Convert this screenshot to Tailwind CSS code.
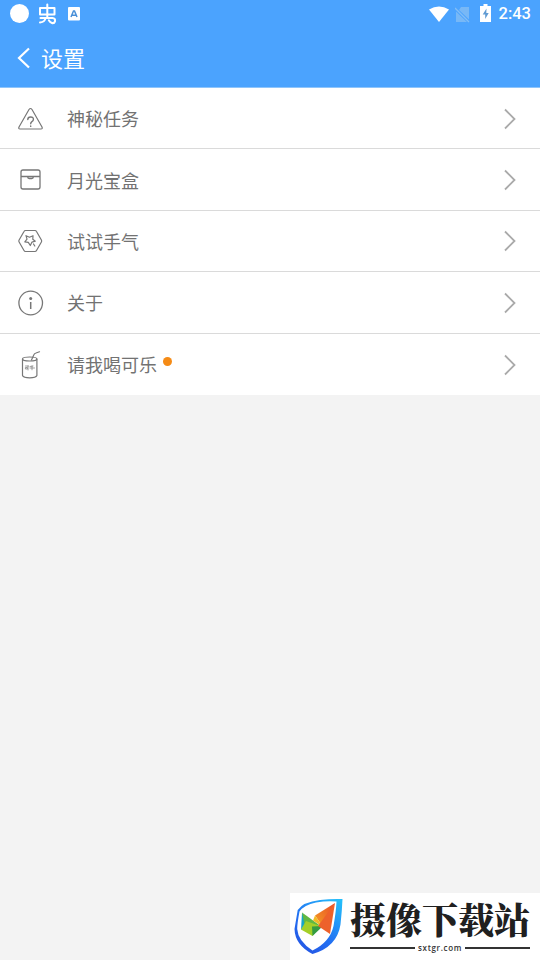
<!DOCTYPE html>
<html lang="zh-CN">
<head>
<meta charset="utf-8">
<title>设置</title>
<script src="https://cdn.jsdelivr.net/npm/@tailwindcss/browser@4"></script>
</head>
<body class="bg-[#f3f3f3] font-['Noto_Sans_CJK_SC',sans-serif]">
<div class="relative flex h-[960px] w-[540px] flex-col overflow-hidden">
  <header class="h-[88px] shrink-0 border-b border-[#8fc5fb] bg-[#4ba3fe] text-white">
    <div class="flex h-7 items-center justify-between pr-[9px] pl-[10px]">
      <div class="flex items-center">
        <span class="-mt-[2px] size-[19px] rounded-full bg-white"></span>
        <svg class="ml-[9px]" width="19" height="22" viewBox="0 0 19 22" fill="none" stroke="#fff" stroke-width="2" stroke-linecap="round" stroke-linejoin="round"><path d="M2 5h14.500v6.500H2zM9.300 1.500v13.500M2.500 15h12q3 .3 2.500 3.300-.8 2.300-3 1.700-2-.7-3.200-2.700M7.500 15q-.5 4-5.500 4.500"/></svg>
        <svg class="ml-[11px]" width="12" height="14" viewBox="0 0 12 14"><rect width="12" height="13.500" rx="1" fill="#fff"/><path d="M3 10 5.500 4h1L9 10M4 8.200h4" fill="none" stroke="#4b91d8" stroke-width="1.500"/></svg>
      </div>
      <div class="flex items-center">
        <svg class="-mt-px" width="20" height="16" viewBox="0 0 20 16"><path d="M0 3.500Q10-2.500 20 3.500L10 16Z" fill="#fff"/></svg>
        <svg class="ml-[6px]" width="15" height="17" viewBox="0 0 15 17"><path d="M6 1h8v12.500L4 4zM1 5.500l11 10.500H1z" fill="#78b8f6"/><path d="m0 2 14 14" stroke="#83bef6" stroke-width="1.300"/></svg>
        <svg class="-mt-[2px] ml-[10px]" width="11" height="18" viewBox="0 0 11 18"><path d="M3.500 0h4v2H11v16H0V2h3.500z" fill="#fff"/><path d="M6.500 4.500 2.700 10.500h2.500V15l3.500-6H6.300z" fill="#609bd3"/></svg>
        <span class="ml-[8px] font-[Roboto,sans-serif] text-[16.500px] leading-none font-medium">2:43</span>
      </div>
    </div>
    <div class="flex h-[59px] items-center pl-[17px]">
      <svg width="14" height="22" viewBox="0 0 14 22" fill="none" stroke="#fff" stroke-width="2.200"><path d="M12 1.500 2 11l10 9.500"/></svg>
      <h1 class="-mt-px ml-[10px] text-[22px] leading-none font-normal">设置</h1>
    </div>
  </header>
  <main class="h-[307px] shrink-0 divide-y divide-[#dadada] bg-white text-[18px] text-[#727272]">
    <a class="flex h-[61.400px] items-center pt-px pr-[23px] pl-[15px]">
      <svg width="32" height="32" viewBox="0 0 32 32" fill="none" stroke="#777" stroke-width="1.200" stroke-linejoin="round" stroke-linecap="round"><path d="M14 6.500q1.500-2 3 0l10 17.500q.8 2-1 2H5q-1.800 0-1-2z"/><path d="M12.800 16.500q0-2.500 2.800-2.500t2.800 2.300q0 1.500-1.500 2.300-1.200.7-1.200 2.200M15.700 23v.4" stroke-width="1.400"/></svg>
      <span class="ml-5 flex-1">神秘任务</span>
      <svg width="14" height="22" viewBox="0 0 14 22" fill="none" stroke="#aaa" stroke-width="1.800"><path d="M2 1.500 11.500 11 2 20.500"/></svg>
    </a>
    <a class="flex h-[61.400px] items-center pt-px pr-[23px] pl-[15px]">
      <svg width="32" height="32" viewBox="0 0 32 32" fill="none" stroke="#777" stroke-width="1.300"><rect x="6" y="6" width="19" height="19" rx="2"/><path d="M6 12.500h19M12.500 12.500q.2 2 1.700 2h2.600q1.500 0 1.700-2"/></svg>
      <span class="ml-5 flex-1">月光宝盒</span>
      <svg width="14" height="22" viewBox="0 0 14 22" fill="none" stroke="#aaa" stroke-width="1.800"><path d="M2 1.500 11.500 11 2 20.500"/></svg>
    </a>
    <a class="flex h-[61.400px] items-center pt-px pr-[23px] pl-[15px]">
      <svg width="32" height="32" viewBox="0 0 32 32" fill="none" stroke="#777" stroke-width="1.200" stroke-linejoin="round" stroke-linecap="round"><path d="M10.500 5.500h9.500q1 0 1.500 1l4.900 8.500q.6 1 0 2l-4.900 8.500q-.5 1-1.500 1h-9.500q-1 0-1.500-1l-4.900-8.500q-.6-1 0-2L9 6.500q.5-1 1.500-1z"/><path d="m11 10.700 3.500 1.500 3.500-1.500-.2 3.500 2.500 2-3.300.9-1.700 3.400-2-3.100-3.500-.6 2.200-2.600zM18.500 19l1.300 2"/></svg>
      <span class="ml-5 flex-1">试试手气</span>
      <svg width="14" height="22" viewBox="0 0 14 22" fill="none" stroke="#aaa" stroke-width="1.800"><path d="M2 1.500 11.500 11 2 20.500"/></svg>
    </a>
    <a class="flex h-[61.400px] items-center pt-px pr-[23px] pl-[15px]">
      <svg width="32" height="32" viewBox="0 0 32 32" fill="none" stroke="#777" stroke-width="1.300"><circle cx="15.700" cy="16" r="11.800"/><path d="M15.700 15V22" stroke-width="1.500"/><circle cx="15.700" cy="11.500" r="1.500" fill="#777" stroke="none"/></svg>
      <span class="ml-5 flex-1">关于</span>
      <svg width="14" height="22" viewBox="0 0 14 22" fill="none" stroke="#aaa" stroke-width="1.800"><path d="M2 1.500 11.500 11 2 20.500"/></svg>
    </a>
    <a class="flex h-[61.400px] items-center pt-px pr-[23px] pl-[15px]">
      <svg width="32" height="32" viewBox="0 0 32 32" fill="none" stroke="#777" stroke-width="1.200" stroke-linecap="round"><ellipse cx="14.700" cy="10" rx="7.200" ry="2"/><path d="M7.500 10v16.500q1 2.300 7.200 2.300t7.200-2.300V10M16.500 11l2.500-5.500q.5-1.200 2-1.500l3.500-1.200"/><path d="M10.500 17h3M13 17v4M10.800 18.500h1.500V20h-1.500zM15 17.500l3-.5M15 19h4.500M17 17v3.800" stroke-width=".7"/></svg>
      <span class="ml-5">请我喝可乐</span>
      <span class="mb-[7px] ml-[6px] size-[9px] rounded-full bg-[#f58b16]"></span>
      <svg class="ml-auto" width="14" height="22" viewBox="0 0 14 22" fill="none" stroke="#aaa" stroke-width="1.800"><path d="M2 1.500 11.500 11 2 20.500"/></svg>
    </a>
  </main>
  <aside class="absolute right-0 bottom-0 flex h-[67px] w-[250px] bg-white pl-[4px]">
    <svg class="mt-[5px] shrink-0" width="50" height="57" viewBox="0 0 50 57">
      <defs>
        <linearGradient id="shield" x1=".2" y1="1" x2=".9" y2="0"><stop stop-color="#2455e4"/><stop offset=".4" stop-color="#2370f2"/><stop offset="1" stop-color="#24bdfa"/></linearGradient>
        <linearGradient id="flame" x1="0" y1="1" x2="1" y2="0"><stop stop-color="#f4a123"/><stop offset="1" stop-color="#e94928"/></linearGradient>
      </defs>
      <path fill="url(#shield)" fill-rule="evenodd" d="M3.700 12Q9 4 26 2 38 .5 48.500 1q-.5 12-2 25.500Q43 49 18.500 56 1 47 .5 31zM5.500 13.500Q3.300 25 3.200 31q.8 12 15.300 21.500Q36 44 39.500 28 42 14 42.500 3.500 33 2.500 22 4.500 10 7 5.500 13.500z"/>
      <path fill="#16a5c8" d="M8 14.500 13 24 7 32z"/>
      <path fill="#62b843" d="m8 14.500 18 13-15 1z"/>
      <path fill="#a4cf28" d="m7 31.500 5-8.500 14 5-7.500 10z"/>
      <path fill="#359c42" d="m18 28.500 11-.500-10.500 10z"/>
      <path fill="url(#flame)" d="M21 17.500 41 5 29 29z"/>
      <path fill="#f2ba27" d="m21 17.500-2 5 10 6.500z"/>
      <path fill="#ed612b" d="m41 5-5 31-12-8z"/>
    </svg>
    <div class="ml-[6px] w-[180px]">
      <div class="mt-[7px] h-[38px] text-[36px] leading-[38px] font-black whitespace-nowrap text-[#202020] font-['Noto_Serif_CJK_SC','Noto_Sans_CJK_SC',serif]">摄像下载站</div>
      <div class="mt-[4px] flex h-[11px] items-center text-[#333]">
        <span class="h-[2px] flex-1 bg-[#333]"></span>
        <span class="px-[3px] font-['Open_Sans',sans-serif] text-[8px] leading-none font-semibold tracking-[.65px]">sxtgr.com</span>
        <span class="h-[2px] flex-1 bg-[#333]"></span>
      </div>
    </div>
  </aside>
</div>
</body>
</html>
